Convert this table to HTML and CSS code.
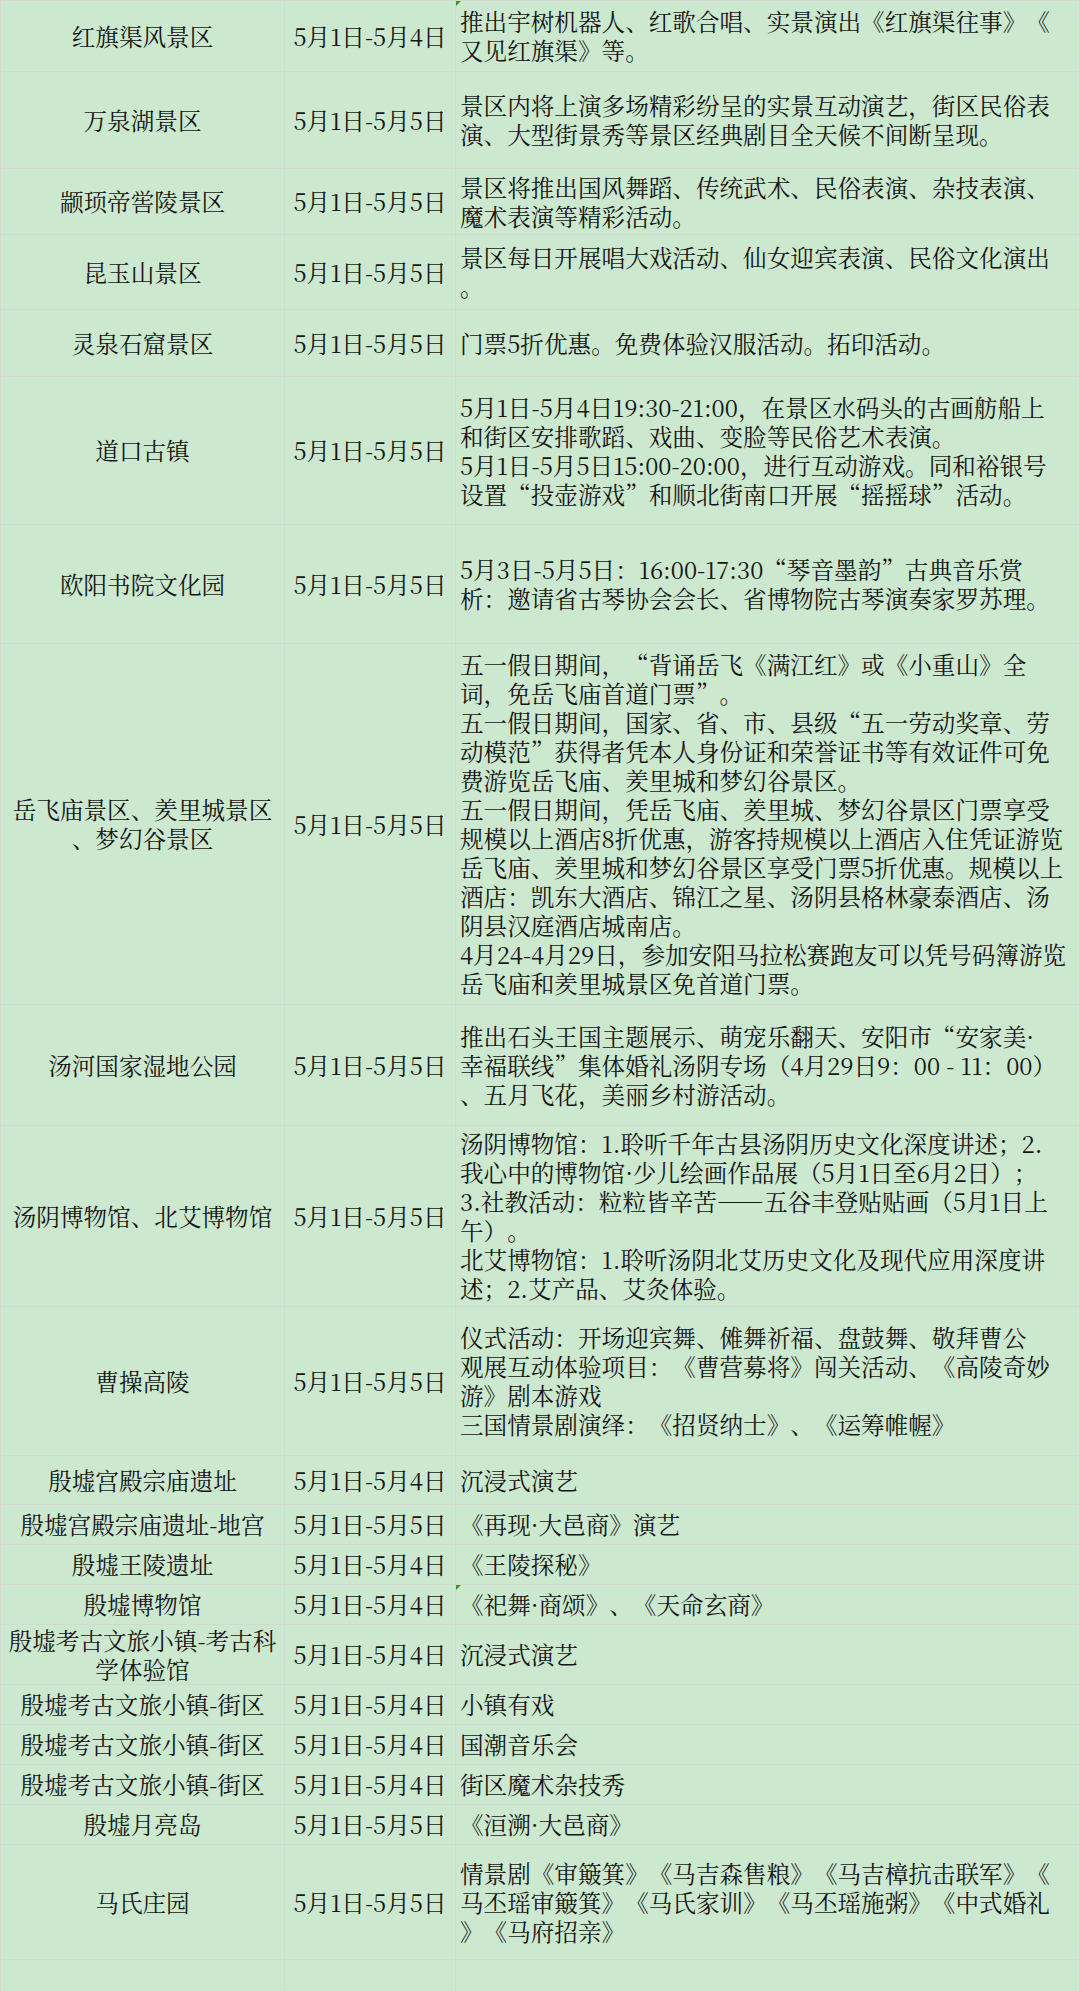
FILE: index.html
```html
<!DOCTYPE html>
<html lang="zh-CN">
<head>
<meta charset="utf-8">
<title>五一活动一览</title>
<link rel="stylesheet" href="styles.css">
</head>
<body>
<div class="sheet">
  <div class="c name">红旗渠风景区</div>
  <div class="c date">5月1日-5月4日</div>
  <div class="c desc mark">推出宇树机器人、红歌合唱、实景演出《红旗渠往事》《<br>又见红旗渠》等。</div>

  <div class="c name">万泉湖景区</div>
  <div class="c date">5月1日-5月5日</div>
  <div class="c desc">景区内将上演多场精彩纷呈的实景互动演艺，街区民俗表<br>演、大型街景秀等景区经典剧目全天候不间断呈现。</div>

  <div class="c name">颛顼帝喾陵景区</div>
  <div class="c date">5月1日-5月5日</div>
  <div class="c desc">景区将推出国风舞蹈、传统武术、民俗表演、杂技表演、<br>魔术表演等精彩活动。</div>

  <div class="c name">昆玉山景区</div>
  <div class="c date">5月1日-5月5日</div>
  <div class="c desc">景区每日开展唱大戏活动、仙女迎宾表演、民俗文化演出<br>。</div>

  <div class="c name">灵泉石窟景区</div>
  <div class="c date">5月1日-5月5日</div>
  <div class="c desc">门票5折优惠。免费体验汉服活动。拓印活动。</div>

  <div class="c name">道口古镇</div>
  <div class="c date">5月1日-5月5日</div>
  <div class="c desc">5月1日-5月4日19:30-21:00，在景区水码头的古画舫船上<br>和街区安排歌蹈、戏曲、变脸等民俗艺术表演。<br>5月1日-5月5日15:00-20:00，进行互动游戏。同和裕银号<br>设置“投壶游戏”和顺北街南口开展“摇摇球”活动。</div>

  <div class="c name">欧阳书院文化园</div>
  <div class="c date">5月1日-5月5日</div>
  <div class="c desc">5月3日-5月5日：16:00-17:30“琴音墨韵”古典音乐赏<br>析：邀请省古琴协会会长、省博物院古琴演奏家罗苏理。</div>

  <div class="c name">岳飞庙景区、羑里城景区<br>、梦幻谷景区</div>
  <div class="c date">5月1日-5月5日</div>
  <div class="c desc">五一假日期间，“背诵岳飞《满江红》或《小重山》全<br>词，免岳飞庙首道门票”。<br>五一假日期间，国家、省、市、县级“五一劳动奖章、劳<br>动模范”获得者凭本人身份证和荣誉证书等有效证件可免<br>费游览岳飞庙、羑里城和梦幻谷景区。<br>五一假日期间，凭岳飞庙、羑里城、梦幻谷景区门票享受<br>规模以上酒店8折优惠，游客持规模以上酒店入住凭证游览<br>岳飞庙、羑里城和梦幻谷景区享受门票5折优惠。规模以上<br>酒店：凯东大酒店、锦江之星、汤阴县格林豪泰酒店、汤<br>阴县汉庭酒店城南店。<br>4月24-4月29日，参加安阳马拉松赛跑友可以凭号码簿游览<br>岳飞庙和羑里城景区免首道门票。</div>

  <div class="c name">汤河国家湿地公园</div>
  <div class="c date">5月1日-5月5日</div>
  <div class="c desc">推出石头王国主题展示、萌宠乐翻天、安阳市“安家美·<br>幸福联线”集体婚礼汤阴专场（4月29日9：00 - 11：00）<br>、五月飞花，美丽乡村游活动。</div>

  <div class="c name">汤阴博物馆、北艾博物馆</div>
  <div class="c date">5月1日-5月5日</div>
  <div class="c desc">汤阴博物馆：1.聆听千年古县汤阴历史文化深度讲述；2.<br>我心中的博物馆·少儿绘画作品展（5月1日至6月2日）；<br>3.社教活动：粒粒皆辛苦——五谷丰登贴贴画（5月1日上<br>午）。<br>北艾博物馆：1.聆听汤阴北艾历史文化及现代应用深度讲<br>述；2.艾产品、艾灸体验。</div>

  <div class="c name">曹操高陵</div>
  <div class="c date">5月1日-5月5日</div>
  <div class="c desc">仪式活动：开场迎宾舞、傩舞祈福、盘鼓舞、敬拜曹公<br>观展互动体验项目：《曹营募将》闯关活动、《高陵奇妙<br>游》剧本游戏<br>三国情景剧演绎：《招贤纳士》、《运筹帷幄》</div>

  <div class="c name">殷墟宫殿宗庙遗址</div>
  <div class="c date">5月1日-5月4日</div>
  <div class="c desc">沉浸式演艺</div>

  <div class="c name">殷墟宫殿宗庙遗址-地宫</div>
  <div class="c date">5月1日-5月5日</div>
  <div class="c desc">《再现·大邑商》演艺</div>

  <div class="c name">殷墟王陵遗址</div>
  <div class="c date">5月1日-5月4日</div>
  <div class="c desc">《王陵探秘》</div>

  <div class="c name">殷墟博物馆</div>
  <div class="c date">5月1日-5月4日</div>
  <div class="c desc mark">《祀舞·商颂》、《天命玄商》</div>

  <div class="c name">殷墟考古文旅小镇-考古科<br>学体验馆</div>
  <div class="c date">5月1日-5月4日</div>
  <div class="c desc">沉浸式演艺</div>

  <div class="c name">殷墟考古文旅小镇-街区</div>
  <div class="c date">5月1日-5月4日</div>
  <div class="c desc">小镇有戏</div>

  <div class="c name">殷墟考古文旅小镇-街区</div>
  <div class="c date">5月1日-5月4日</div>
  <div class="c desc">国潮音乐会</div>

  <div class="c name">殷墟考古文旅小镇-街区</div>
  <div class="c date">5月1日-5月4日</div>
  <div class="c desc">街区魔术杂技秀</div>

  <div class="c name">殷墟月亮岛</div>
  <div class="c date">5月1日-5月5日</div>
  <div class="c desc">《洹溯·大邑商》</div>

  <div class="c name">马氏庄园</div>
  <div class="c date">5月1日-5月5日</div>
  <div class="c desc">情景剧《审簸箕》《马吉森售粮》《马吉樟抗击联军》《<br>马丕瑶审簸箕》《马氏家训》《马丕瑶施粥》《中式婚礼<br>》《马府招亲》</div>

  <div class="c name"></div>
  <div class="c date"></div>
  <div class="c desc"></div>
</div>
</body>
</html>
```

FILE: styles.css
```css
html, body {
  margin: 0;
  padding: 0;
  overflow: hidden;
  background: #cce8cf;
}

.sheet {
  display: grid;
  grid-template-columns: 284px 171px 1fr;
  grid-template-rows: 71px 97px 66px 75px 67px 148px 119px 361px 121px 181px 149px 49px 40px 40px 40px 60px 40px 40px 40px 40px 115px 40px;
  border-top: 1px solid #d3d8d3;
  border-left: 1px solid #d3d8d3;
  background: #cce8cf;
  font-family: "Noto Serif CJK SC", "Noto Sans CJK SC", "Liberation Serif", serif;
  font-size: 23.6px;
  line-height: 29px;
  color: #161616;
  text-spacing-trim: space-all;
}

.c {
  box-sizing: border-box;
  border-right: 1px solid #d3d8d3;
  border-bottom: 1px solid #d3d8d3;
  display: flex;
  align-items: center;
  white-space: nowrap;
  position: relative;
  overflow: visible;
}

.name,
.date {
  justify-content: center;
  text-align: center;
}

.desc {
  justify-content: flex-start;
  text-align: left;
  padding-left: 4px;
}

.mark::before {
  content: "";
  position: absolute;
  top: 0;
  left: 0;
  width: 0;
  height: 0;
  border-top: 5px solid #2f9a2f;
  border-right: 5px solid transparent;
}
```
